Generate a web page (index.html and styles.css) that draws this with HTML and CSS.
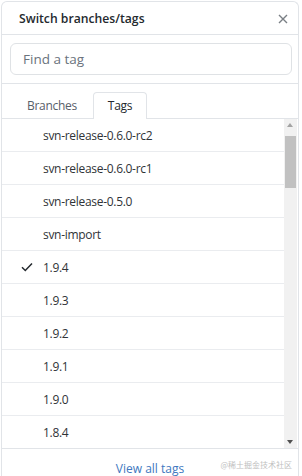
FILE: index.html
```html
<!DOCTYPE html>
<html lang="en">
<head>
    <meta charset="UTF-8">
    <meta name="viewport" content="width=device-width, initial-scale=1.0">
    <title>Switch branches/tags</title>
    <link rel="stylesheet" href="styles.css">
</head>
<body>
    <div class="modal">
        <div class="modal-header">
            <span class="modal-title">Switch branches/tags</span>
            <svg class="close-icon" width="10" height="10" viewBox="0 0 10 10">
                <path d="M1 1L9 9M9 1L1 9" stroke="#7a7f85" stroke-width="1.4" fill="none"/>
            </svg>
        </div>

        <div class="filter">
            <input type="text" class="filter-input" placeholder="Find a tag">
        </div>

        <div class="tabs">
            <span class="tab">Branches</span>
            <span class="tab tab-selected">Tags</span>
        </div>

        <div class="list-wrap">
            <div class="list">
                <div class="list-item"><span class="check"></span>svn-release-0.6.0-rc2</div>
                <div class="list-item"><span class="check"></span>svn-release-0.6.0-rc1</div>
                <div class="list-item"><span class="check"></span>svn-release-0.5.0</div>
                <div class="list-item"><span class="check"></span>svn-import</div>
                <div class="list-item">
                    <span class="check">
                        <svg width="12" height="10" viewBox="0 0 12 10">
                            <path d="M1 5.2L4.3 8.5L11 1.5" stroke="#24292e" stroke-width="1.5" fill="none"/>
                        </svg>
                    </span>1.9.4
                </div>
                <div class="list-item"><span class="check"></span>1.9.3</div>
                <div class="list-item"><span class="check"></span>1.9.2</div>
                <div class="list-item"><span class="check"></span>1.9.1</div>
                <div class="list-item"><span class="check"></span>1.9.0</div>
                <div class="list-item"><span class="check"></span>1.8.4</div>
            </div>
            <div class="scrollbar">
                <span class="arrow arrow-up"></span>
                <div class="track">
                    <div class="thumb"></div>
                </div>
                <span class="arrow arrow-down"></span>
            </div>
        </div>

        <div class="modal-footer">
            <a href="#" class="view-all">View all tags</a>
            <span class="watermark">@稀土掘金技术社区</span>
        </div>
    </div>
</body>
</html>
```

FILE: styles.css
```css
body {
    margin: 0;
    padding: 1px 0 0 1px;
    background-color: #ffffff;
    font-family: "Open Sans", "Noto Sans", sans-serif;
    color: #24292e;
    height: 476px;
    overflow: hidden;
}
.modal {
    width: 296px;
    border: 1px solid #e1e4e8;
    border-bottom: none;
    border-radius: 6px 6px 0 0;
    background-color: #ffffff;
}
.modal-header {
    display: flex;
    align-items: center;
    justify-content: space-between;
    height: 32px;
    padding: 0 10px 0 17px;
    border-bottom: 1px solid #e1e4e8;
}
.modal-title {
    font-size: 12.2px;
    font-weight: 600;
    color: #24292e;
}
.close-icon {
    margin-top: 1px;
}
.filter {
    padding: 8px 6px 8px 8px;
    border-bottom: 1px solid #e1e4e8;
}
.filter-input {
    display: block;
    box-sizing: border-box;
    width: 100%;
    height: 32px;
    padding: 0 12px;
    border: 1px solid #dfe2e5;
    border-radius: 6px;
    font-family: inherit;
    font-size: 13.5px;
    color: #24292e;
    outline: none;
}
.filter-input::placeholder {
    color: #6a737d;
}
.tabs {
    display: flex;
    padding: 8px 0 0 9px;
    border-bottom: 1px solid #e1e4e8;
}
.tab {
    display: block;
    height: 25px;
    line-height: 25px;
    padding: 0 15px;
    font-size: 12px;
    letter-spacing: -0.3px;
    color: #586069;
    border: 1px solid transparent;
    border-bottom: none;
    border-radius: 4px 4px 0 0;
    margin-bottom: -1px;
}
.tab-selected {
    color: #24292e;
    background-color: #ffffff;
    border-color: #e1e4e8;
    height: 26px;
    padding: 0 14px;
}
.list-wrap {
    display: flex;
    height: 329px;
    overflow: hidden;
}
.list {
    flex: 1;
}
.list-item {
    display: flex;
    align-items: center;
    height: 32px;
    border-bottom: 1px solid #eaecef;
    font-size: 12px;
    letter-spacing: -0.3px;
    color: #2f3337;
}
.check {
    display: flex;
    align-items: center;
    width: 41px;
    padding-left: 19px;
    box-sizing: border-box;
}
.scrollbar {
    display: flex;
    flex-direction: column;
    width: 13px;
    margin-right: 1px;
    background-color: #f1f1f1;
}
.arrow {
    display: block;
    height: 13px;
    position: relative;
}
.arrow-up::after,
.arrow-down::after {
    content: "";
    position: absolute;
    left: 3px;
    border-left: 3.5px solid transparent;
    border-right: 3.5px solid transparent;
}
.arrow-up::after {
    top: 4px;
    border-bottom: 4px solid #a3a3a3;
}
.arrow-down::after {
    top: 5px;
    border-top: 4px solid #505050;
}
.track {
    flex: 1;
    padding: 4px 1px 0;
}
.thumb {
    height: 52px;
    background-color: #c1c1c1;
}
.modal-footer {
    position: relative;
    border-top: 1px solid #e1e4e8;
    padding: 7px 0;
    text-align: center;
}
.view-all {
    font-size: 12px;
    color: #4078c0;
    text-decoration: none;
}
.watermark {
    position: absolute;
    right: 6px;
    top: 10px;
    font-family: "Noto Sans CJK SC", sans-serif;
    font-size: 8px;
    color: #c0c0c0;
}
```
